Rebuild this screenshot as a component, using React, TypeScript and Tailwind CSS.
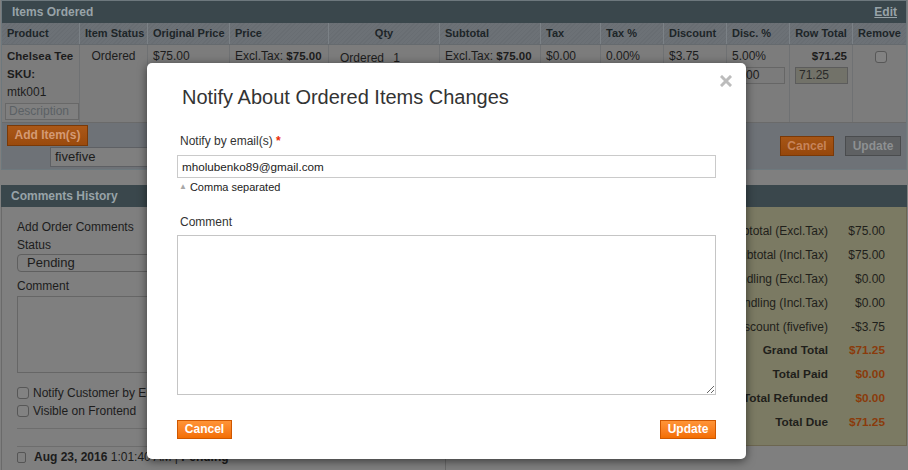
import React from "react";

const cols =
  "grid grid-cols-[78px_68px_82px_99px_111px_101px_60px_63px_63px_63px_63px_53px]";

function Box({ className = "" }: { className?: string }) {
  return (
    <span
      className={`inline-block w-[12px] h-[12px] rounded-[3px] border border-[#575757] bg-[#828282] ${className}`}
    />
  );
}

const headers: [string, string][] = [
  ["Product", "text-left"],
  ["Item Status", "text-left"],
  ["Original Price", "text-left"],
  ["Price", "text-left"],
  ["Qty", "text-center"],
  ["Subtotal", "text-left"],
  ["Tax", "text-left"],
  ["Tax %", "text-left"],
  ["Discount", "text-left"],
  ["Disc. %", "text-left"],
  ["Row Total", "text-center"],
  ["Remove", "text-center"],
];

const totals: [string, string, boolean][] = [
  ["Subtotal (Excl.Tax)", "$75.00", false],
  ["Subtotal (Incl.Tax)", "$75.00", false],
  ["Shipping & Handling (Excl.Tax)", "$0.00", false],
  ["Shipping & Handling (Incl.Tax)", "$0.00", false],
  ["Discount (fivefive)", "-$3.75", false],
  ["Grand Total", "$71.25", true],
  ["Total Paid", "$0.00", true],
  ["Total Refunded", "$0.00", true],
  ["Total Due", "$71.25", true],
];

export default function App() {
  const cell =
    "border-r border-[#6f7173] px-[5px] pt-[2px] leading-[18px] whitespace-nowrap";
  return (
    <div className="relative w-[908px] h-[470px] overflow-hidden bg-[#7f7f7f] text-[12px] text-[#1c1c1c] [font-family:'Liberation_Sans',Arial,sans-serif]">
      {/* Items Ordered section */}
      <div className="mx-px border border-[#6d787d]">
        <div className="h-[22px] bg-[#3a474c] flex items-center justify-between px-[10px]">
          <span className="font-bold text-[12px] text-[#98a3a8]">Items Ordered</span>
          <span className="font-bold text-[12px] text-[#98a3a8] underline mr-[-1px]">Edit</span>
        </div>
        <div
          className={`${cols} h-[22px] bg-[repeating-linear-gradient(-45deg,#6c7176_0px,#6c7176_2px,#686d72_2px,#686d72_3px)] border-b border-[#656a6e]`}
        >
          {headers.map(([h, a]) => (
            <div
              key={h}
              className={`border-r border-[#7b8186] last:border-r-0 px-[5px] leading-[21px] font-bold text-[11px] text-[#1d2528] whitespace-nowrap ${a}`}
            >
              {h}
            </div>
          ))}
        </div>
        <div className={`${cols} h-[78px] bg-[#7c7c7c] border-b border-[#6a6a6a]`}>
          <div className={cell}>
            <div className="font-bold text-[11.5px]">Chelsea Tee</div>
            <div className="font-bold text-[11.5px]">SKU:</div>
            <div>mtk001</div>
            <div className="mt-[2px] -ml-[2px] w-[74px] h-[17px] border border-[#686868] bg-[#7f7f7f] text-[#5b6165] px-[3px] leading-[15px]">
              Description
            </div>
          </div>
          <div className={`${cell} text-center`}>Ordered</div>
          <div className={cell}>$75.00</div>
          <div className={cell}>
            Excl.Tax: <b className="text-[11.5px]">$75.00</b>
          </div>
          <div className={`${cell} pt-[4px] pl-[11px]`}>
            Ordered <span className="ml-[6px]">1</span>
          </div>
          <div className={cell}>
            Excl.Tax: <b className="text-[11.5px]">$75.00</b>
          </div>
          <div className={cell}>$0.00</div>
          <div className={cell}>0.00%</div>
          <div className={cell}>$3.75</div>
          <div className={cell}>
            <div>5.00%</div>
            <div className="mt-[2px] w-[53px] h-[17px] border border-[#666] bg-[#7b7b7b] px-[3px] leading-[15px]">
              5.00
            </div>
          </div>
          <div className={`${cell} pl-[5px]`}>
            <div className="text-right font-bold text-[11.5px]">$71.25</div>
            <div className="mt-[2px] w-[53px] h-[17px] border border-[#5c5c5c] bg-[#727269] px-[3px] leading-[15px] text-[#2a2a2a]">
              71.25
            </div>
          </div>
          <div className="flex justify-center pt-[6px]">
            <Box className="ml-[2px]" />
          </div>
        </div>
        <div className="h-[46px] bg-[#6e7277] flex justify-between px-[5px] pt-[2px]">
          <div className="flex flex-col">
            <div className="w-[81px] h-[21px] border border-[#7a3907] bg-gradient-to-b from-[#ab5818] to-[#9a4a0d] text-center leading-[19px] font-bold text-[12px] text-[#d49a74]">
              Add Item(s)
            </div>
            <div className="ml-[43px] mt-px w-[300px] h-[20px] border border-[#5e6064] bg-[#7f7f7f] px-[4px] leading-[18px] text-[13px]">
              fivefive
            </div>
          </div>
          <div className="flex gap-[11px] pt-[11px]">
            <div className="w-[54px] h-[20px] border border-[#7a3907] bg-gradient-to-b from-[#a65515] to-[#96470b] text-center leading-[18px] font-bold text-[12px] text-[#c6845a]">
              Cancel
            </div>
            <div className="w-[56px] h-[20px] border border-[#4a4c4e] bg-[#5f6163] text-center leading-[18px] font-bold text-[12px] text-[#8d9092]">
              Update
            </div>
          </div>
        </div>
      </div>

      {/* lower boxes */}
      <div className="grid grid-cols-2 gap-[16px] px-px mt-[15px]">
        <div>
          <div className="h-[22px] bg-[#3a474c] flex items-center px-[10px]">
            <span className="font-bold text-[12px] text-[#98a3a8]">Comments History</span>
          </div>
          <div className="border-x border-[#6a6a6a] bg-[#7f7f7f] pl-[15px] pr-[14px] pt-[11px] leading-[18px] h-[300px]">
            <div>Add Order Comments</div>
            <div>Status</div>
            <div className="h-[18px] border border-[#5f5f5f] rounded-[4px] pl-[9px] leading-[16px] text-[13px]">
              Pending
            </div>
            <div className="mt-[5px]">Comment</div>
            <div className="mt-px h-[77px] border border-[#666]" />
            <div className="mt-[11px] flex items-center gap-[4px]">
              <Box />
              <span>Notify Customer by Email</span>
            </div>
            <div className="flex items-center gap-[4px]">
              <Box />
              <span>Visible on Frontend</span>
            </div>
            <div className="mt-[8px] h-[18px] border-t border-[#6d6d6d]" />
            <div className="border-t border-[#6d6d6d] flex items-center gap-[8px] pt-px">
              <span className="inline-block w-[9px] h-[11px] border border-[#555] rounded-[2px]" />
              <span>
                <b>Aug 23, 2016</b> 1:01:40 AM | <b>Pending</b>
              </span>
            </div>
          </div>
        </div>
        <div>
          <div className="h-[22px] bg-[#3a474c] flex items-center px-[10px]">
            <span className="font-bold text-[12px] text-[#98a3a8]">Order Totals</span>
          </div>
          <div className="bg-[#7b7a63] border border-t-0 border-[#6c6650] pt-[12px] pb-[10px] pr-[21px]">
            {totals.map(([l, v, b]) => (
              <div
                key={l}
                className={`flex h-[24px] items-center ${b ? "font-bold text-[11.8px]" : "text-[12px]"} text-[#1f1f1b]`}
              >
                <div className="flex-1 text-right whitespace-nowrap">{l}</div>
                <div className={`w-[57px] text-right ${b ? "text-[#8a3b0b]" : ""}`}>{v}</div>
              </div>
            ))}
          </div>
        </div>
      </div>

      {/* Modal */}
      <div className="absolute left-[147px] top-[63px] w-[599px] h-[396px] bg-white rounded-[5px] shadow-[0_2px_10px_rgba(0,0,0,0.55)] flex flex-col px-[30px] text-[#333]">
        <svg
          className="absolute right-[14px] top-[12px]"
          width="12"
          height="12"
          viewBox="0 0 12 12"
        >
          <path d="M2 2 L10 10 M10 2 L2 10" stroke="#bcbcbc" strokeWidth="3" strokeLinecap="square" />
        </svg>
        <h2 className="mt-[22px] ml-[5px] text-[20px] leading-[24px] text-[#333]">
          Notify About Ordered Items Changes
        </h2>
        <label className="mt-[25px] ml-[3px] text-[12px] leading-[15px]">
          Notify by email(s) <span className="text-[#eb2a0a] font-bold">*</span>
        </label>
        <div className="mt-[6px] h-[23px] border border-[#cacaca] px-[4px] leading-[21px] text-[11.7px] text-[#222]">
          mholubenko89@gmail.com
        </div>
        <div className="mt-[2px] ml-[2px] flex items-center gap-[3px] text-[11px] leading-[14px] text-[#222]">
          <span className="text-[8px] text-[#a8a8a8]">▲</span>
          <span>Comma separated</span>
        </div>
        <label className="mt-[21px] ml-[3px] text-[12px] leading-[15px]">Comment</label>
        <textarea className="mt-[5px] h-[160px] w-full border border-[#c5c5c5] outline-none" />
        <div className="mt-[25px] flex justify-between">
          <div className="w-[55px] h-[19px] border border-[#cf5700] bg-gradient-to-b from-[#ff9436] to-[#f36e00] text-center leading-[17px] font-bold text-[12px] text-white">
            Cancel
          </div>
          <div className="w-[56px] h-[19px] border border-[#cf5700] bg-gradient-to-b from-[#ff9436] to-[#f36e00] text-center leading-[17px] font-bold text-[12px] text-white">
            Update
          </div>
        </div>
      </div>
    </div>
  );
}
